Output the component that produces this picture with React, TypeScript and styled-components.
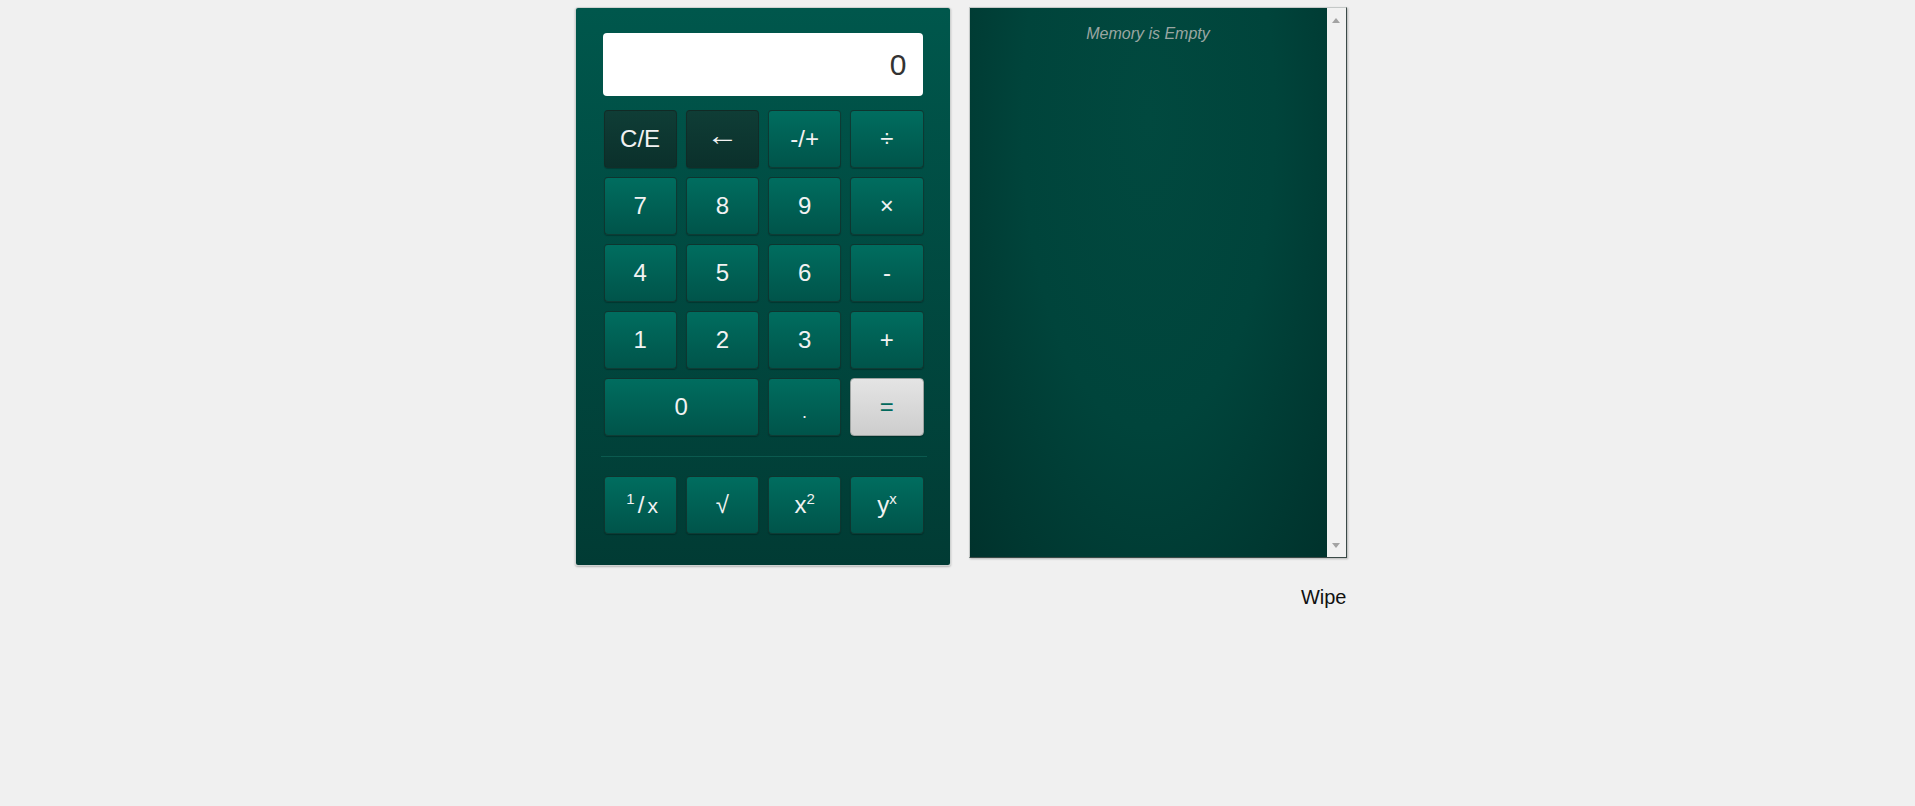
import React, {useState} from 'react';
import styled, {createGlobalStyle, css} from 'styled-components';

const GlobalStyle = createGlobalStyle`
  html, body {
    margin: 0;
    padding: 0;
    background: #f0f0f0;
    font-family: "Liberation Sans", Arial, sans-serif;
  }
`;

const Page = styled.div`
  display: flex;
  flex-direction: column;
  align-items: flex-end;
  width: fit-content;
  margin: 7px auto 0;
  padding-left: 6px;
`;

const Row = styled.div`
  display: flex;
  align-items: flex-start;
  gap: 18px;
`;

const Calculator = styled.div`
  box-sizing: border-box;
  width: 376px;
  padding: 25px 26px 31px 28px;
  border: 1px solid #cfd2d1;
  border-radius: 3px;
  background: linear-gradient(#00574c, #013b34);
  box-shadow: 0 1px 2px rgba(0, 0, 0, 0.25);
`;

const Display = styled.div`
  height: 63px;
  box-sizing: border-box;
  padding: 0 16px;
  margin: 0 1px 14px -1px;
  border-radius: 4px;
  background: #ffffff;
  color: #333333;
  font-size: 30px;
  display: flex;
  align-items: center;
  justify-content: flex-end;
`;

const Keys = styled.div`
  display: grid;
  grid-template-columns: repeat(4, 1fr);
  grid-auto-rows: 58px;
  gap: 9px;
`;

type Tone = 'teal' | 'dark' | 'light';

const Key = styled.button<{$tone?: Tone; $wide?: boolean}>`
  grid-column: ${p => (p.$wide ? 'span 2' : 'auto')};
  margin: 0;
  padding: 0;
  border: 1px solid rgba(20, 40, 36, 0.7);
  border-radius: 4px;
  font-family: "Liberation Sans", Arial, sans-serif;
  font-size: 24px;
  color: #f2f2f2;
  cursor: pointer;
  outline: none;
  box-shadow: 0 1px 1px rgba(0, 0, 0, 0.25);
  background: linear-gradient(#006d5f, #00544a);

  ${p => p.$tone === 'dark' && css`
    background: linear-gradient(#0f3d36, #0b302b);
  `}

  ${p => p.$tone === 'light' && css`
    background: linear-gradient(#e4e4e4, #cdcdcd);
    color: #00695c;
    border-color: #9da3a1;
  `}

  sup {
    font-size: 15px;
    vertical-align: 9px;
    line-height: 0;
  }
`;

const Arrow = styled.span`
  display: inline-block;
  font-size: 28px;
  position: relative;
  top: -3px;
  transform: scaleX(1.15);
`;

const Dot = styled.span`
  font-size: 18px;
  position: relative;
  top: 3px;
`;

const Fraction = styled.span`
  letter-spacing: 3px;
  padding-left: 4px;

  small {
    font-size: 21px;
    letter-spacing: 0;
  }
`;

const Divider = styled.div`
  height: 1px;
  margin: 20px -3px 19px;
  background: #0b5a4f;
`;

const Memory = styled.div`
  box-sizing: border-box;
  width: 378px;
  height: 551px;
  display: flex;
  border: 1px solid #c4c8c7;
  border-right-color: #3a4a47;
  border-bottom-color: #3a4a47;
  box-shadow: 1px 1px 2px rgba(0, 0, 0, 0.25);
  background: #f0f0f0;
`;

const MemoryList = styled.div`
  flex: 1;
  padding-top: 17px;
  text-align: center;
  background: radial-gradient(ellipse at 50% 20%, #01493f 0%, #00443b 50%, #00322c 100%);
`;

const EmptyNote = styled.div`
  font-style: italic;
  font-size: 16px;
  color: #9aa6a2;
`;

const ScrollBar = styled.div`
  width: 19px;
  display: flex;
  flex-direction: column;
  justify-content: space-between;
  align-items: center;
  padding: 10px 0 9px;
  background: #f1f1f1;
`;

const ScrollArrow = styled.div<{$down?: boolean}>`
  width: 0;
  height: 0;
  border-left: 4px solid transparent;
  border-right: 4px solid transparent;
  ${p => (p.$down
    ? 'border-top: 5px solid #a3a3a3;'
    : 'border-bottom: 5px solid #a3a3a3;')}
`;

const WipeButton = styled.button`
  margin-top: 20px;
  padding: 0;
  border: none;
  background: transparent;
  font-family: "Liberation Sans", Arial, sans-serif;
  font-size: 20px;
  color: #111111;
  cursor: pointer;
`;

const App = (): JSX.Element => {
  const [value] = useState('0');

  return (
    <>
      <GlobalStyle/>
      <Page>
        <Row>
          <Calculator>
            <Display>{value}</Display>
            <Keys>
              <Key $tone={'dark'}>C/E</Key>
              <Key $tone={'dark'}><Arrow>←</Arrow></Key>
              <Key>-/+</Key>
              <Key>÷</Key>
              <Key>7</Key>
              <Key>8</Key>
              <Key>9</Key>
              <Key>×</Key>
              <Key>4</Key>
              <Key>5</Key>
              <Key>6</Key>
              <Key>-</Key>
              <Key>1</Key>
              <Key>2</Key>
              <Key>3</Key>
              <Key>+</Key>
              <Key $wide>0</Key>
              <Key><Dot>.</Dot></Key>
              <Key $tone={'light'}>=</Key>
            </Keys>
            <Divider/>
            <Keys>
              <Key><Fraction><sup>1</sup>/<small>x</small></Fraction></Key>
              <Key>√</Key>
              <Key>x<sup>2</sup></Key>
              <Key>y<sup>x</sup></Key>
            </Keys>
          </Calculator>
          <Memory>
            <MemoryList>
              <EmptyNote>Memory is Empty</EmptyNote>
            </MemoryList>
            <ScrollBar>
              <ScrollArrow/>
              <ScrollArrow $down/>
            </ScrollBar>
          </Memory>
        </Row>
        <WipeButton>Wipe</WipeButton>
      </Page>
    </>
  );
};

export default App;
